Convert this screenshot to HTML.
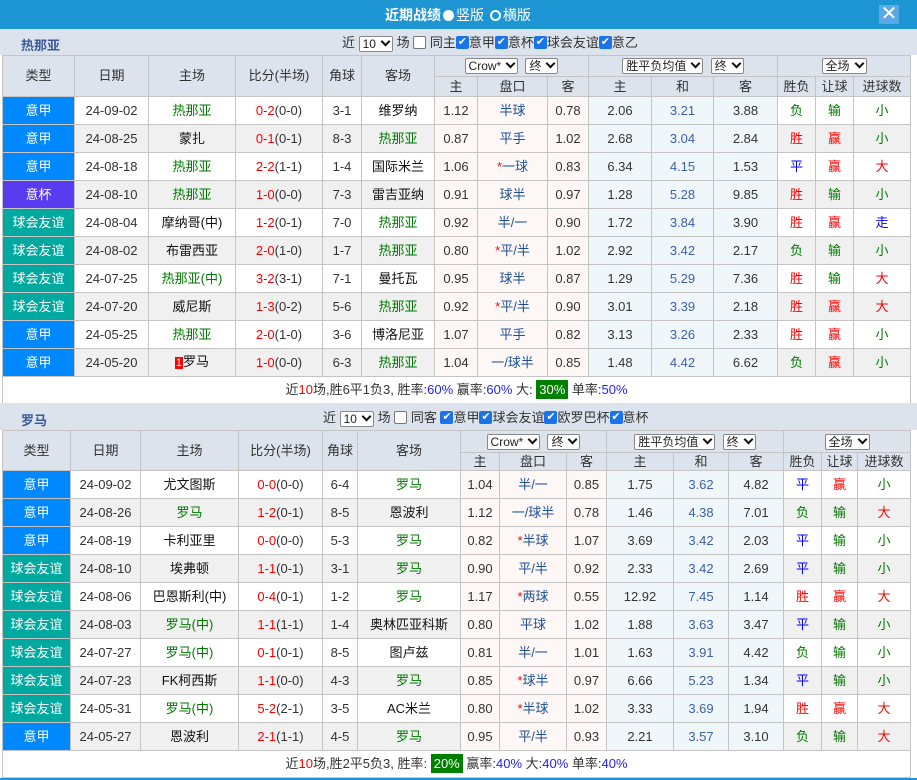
<!DOCTYPE html>
<html><head><meta charset="utf-8">
<style>
*{box-sizing:border-box;margin:0;padding:0}
body{width:917px;height:780px;background:#fff;font-family:"Liberation Sans","Noto Sans CJK SC",sans-serif;font-size:13px;color:#333;position:relative;overflow:hidden}
.title{position:absolute;left:0;top:0;width:917px;height:29px;background:#1e96d4;color:#fff}
.title .t{position:absolute;left:385px;top:5px;font-size:14px;font-weight:bold}
.rad{display:inline-block;width:11px;height:11px;border-radius:50%;vertical-align:-1px;margin:0 2px}
.close{position:absolute;left:879px;top:5px;width:20px;height:19px;background:#5aa9e6;color:#fff;font-size:20px;line-height:18px;text-align:center}
.bar{position:absolute;left:0;width:917px;background:#dce3ed}
.bar .nm{position:absolute;left:21px;font-weight:bold;color:#3a5a9a;font-size:13px}
.flt{position:absolute;white-space:nowrap;font-size:13px;color:#333;line-height:17px}
.sel{display:inline-block;border:1px solid #888;background:#fff;border-radius:2px;height:16px;line-height:14px;padding:0 3px;font-size:12px;vertical-align:middle;color:#222;white-space:nowrap}
.sel:after{content:"";display:inline-block;width:5px;height:5px;border-right:2px solid #111;border-bottom:2px solid #111;transform:rotate(45deg);margin-left:6px;vertical-align:3px}
.cb{display:inline-block;width:13px;height:13px;border-radius:2px;vertical-align:middle;text-align:center;line-height:13px;font-size:11px;position:relative;top:-1px}
.cb.on{background:#1a73e8;color:#fff}
.cb.off{background:#fff;border:1px solid #777}
table{position:absolute;left:2px;width:908px;border-collapse:collapse;table-layout:fixed}
td{border:1px solid #c4c4c4;text-align:center;white-space:nowrap;overflow:hidden;padding:0;line-height:16px}
.hd td{background:#dce3ed;color:#333}
.d td{height:28px}
.d:nth-child(even) td{background:#f0f0f0}
.d td.a{background:#fdf8f5}
.d td.e{background:#f0f7fb}
td.ty{color:#fff!important}
.yj{background:#0088ff!important}.yb{background:#5a3cf0!important}.yy{background:#00a9a0!important}
.g{color:#007a00}.r{color:#f00}.b{color:#00f}.k{color:#111}.h{color:#1e4e9a}.m{color:#3c5fa8}
.sum td{height:27px;background:#fff;font-size:13px}
.gb{background:#008000;color:#fff;padding:2px 3px}
.p{color:#22f}
.rk{background:#f00;color:#fff;font-size:11px;padding:0 1px}
</style></head><body>
<div class="title"><span class="t">近期战绩<span class="rad" style="background:#fff"></span><span style="font-weight:normal">竖版</span> <span class="rad" style="border:2px solid #fff"></span><span style="font-weight:normal">横版</span></span><div class="close">✕</div></div>

<div class="bar" style="top:29px;height:26px"><span class="nm" style="top:6px">热那亚</span>
<div class="flt" style="left:342px;top:5px">近 <span class="sel">10</span> 场 <span class="cb off"></span> 同主<span class="cb on">✔</span>意甲<span class="cb on">✔</span>意杯<span class="cb on">✔</span>球会友谊<span class="cb on">✔</span>意乙</div></div>

<table style="top:55px">
<colgroup><col width="72"><col width="74"><col width="87"><col width="87"><col width="39"><col width="73"><col width="43"><col width="70"><col width="41"><col width="63"><col width="62"><col width="64"><col width="38"><col width="38"><col width="57"></colgroup>
<tr class="hd" style="height:21px"><td rowspan="2">类型</td><td rowspan="2">日期</td><td rowspan="2">主场</td><td rowspan="2">比分(半场)</td><td rowspan="2">角球</td><td rowspan="2">客场</td><td colspan="3"><span class="sel">Crow*</span> &nbsp;<span class="sel">终</span></td><td colspan="3"><span class="sel">胜平负均值</span> &nbsp;<span class="sel">终</span></td><td colspan="3"><span class="sel">全场</span></td></tr>
<tr class="hd" style="height:20px"><td>主</td><td>盘口</td><td>客</td><td>主</td><td>和</td><td>客</td><td>胜负</td><td>让球</td><td>进球数</td></tr>
<tbody>
<tr class="d"><td class="ty yj">意甲</td><td>24-09-02</td><td class="g">热那亚</td><td><span class="r">0-2</span>(0-0)</td><td>3-1</td><td class="k">维罗纳</td><td class="a">1.12</td><td class="a h">半球</td><td class="a">0.78</td><td class="e">2.06</td><td class="e m">3.21</td><td class="e">3.88</td><td class="g">负</td><td class="g">输</td><td class="g">小</td></tr>
<tr class="d"><td class="ty yj">意甲</td><td>24-08-25</td><td class="k">蒙扎</td><td><span class="r">0-1</span>(0-1)</td><td>8-3</td><td class="g">热那亚</td><td class="a">0.87</td><td class="a h">平手</td><td class="a">1.02</td><td class="e">2.68</td><td class="e m">3.04</td><td class="e">2.84</td><td class="r">胜</td><td class="r">赢</td><td class="g">小</td></tr>
<tr class="d"><td class="ty yj">意甲</td><td>24-08-18</td><td class="g">热那亚</td><td><span class="r">2-2</span>(1-1)</td><td>1-4</td><td class="k">国际米兰</td><td class="a">1.06</td><td class="a h"><span class="r">*</span>一球</td><td class="a">0.83</td><td class="e">6.34</td><td class="e m">4.15</td><td class="e">1.53</td><td class="b">平</td><td class="r">赢</td><td class="r">大</td></tr>
<tr class="d"><td class="ty yb">意杯</td><td>24-08-10</td><td class="g">热那亚</td><td><span class="r">1-0</span>(0-0)</td><td>7-3</td><td class="k">雷吉亚纳</td><td class="a">0.91</td><td class="a h">球半</td><td class="a">0.97</td><td class="e">1.28</td><td class="e m">5.28</td><td class="e">9.85</td><td class="r">胜</td><td class="g">输</td><td class="g">小</td></tr>
<tr class="d"><td class="ty yy">球会友谊</td><td>24-08-04</td><td class="k">摩纳哥(中)</td><td><span class="r">1-2</span>(0-1)</td><td>7-0</td><td class="g">热那亚</td><td class="a">0.92</td><td class="a h">半/一</td><td class="a">0.90</td><td class="e">1.72</td><td class="e m">3.84</td><td class="e">3.90</td><td class="r">胜</td><td class="r">赢</td><td class="b">走</td></tr>
<tr class="d"><td class="ty yy">球会友谊</td><td>24-08-02</td><td class="k">布雷西亚</td><td><span class="r">2-0</span>(1-0)</td><td>1-7</td><td class="g">热那亚</td><td class="a">0.80</td><td class="a h"><span class="r">*</span>平/半</td><td class="a">1.02</td><td class="e">2.92</td><td class="e m">3.42</td><td class="e">2.17</td><td class="g">负</td><td class="g">输</td><td class="g">小</td></tr>
<tr class="d"><td class="ty yy">球会友谊</td><td>24-07-25</td><td class="g">热那亚(中)</td><td><span class="r">3-2</span>(3-1)</td><td>7-1</td><td class="k">曼托瓦</td><td class="a">0.95</td><td class="a h">球半</td><td class="a">0.87</td><td class="e">1.29</td><td class="e m">5.29</td><td class="e">7.36</td><td class="r">胜</td><td class="g">输</td><td class="r">大</td></tr>
<tr class="d"><td class="ty yy">球会友谊</td><td>24-07-20</td><td class="k">威尼斯</td><td><span class="r">1-3</span>(0-2)</td><td>5-6</td><td class="g">热那亚</td><td class="a">0.92</td><td class="a h"><span class="r">*</span>平/半</td><td class="a">0.90</td><td class="e">3.01</td><td class="e m">3.39</td><td class="e">2.18</td><td class="r">胜</td><td class="r">赢</td><td class="r">大</td></tr>
<tr class="d"><td class="ty yj">意甲</td><td>24-05-25</td><td class="g">热那亚</td><td><span class="r">2-0</span>(1-0)</td><td>3-6</td><td class="k">博洛尼亚</td><td class="a">1.07</td><td class="a h">平手</td><td class="a">0.82</td><td class="e">3.13</td><td class="e m">3.26</td><td class="e">2.33</td><td class="r">胜</td><td class="r">赢</td><td class="g">小</td></tr>
<tr class="d"><td class="ty yj">意甲</td><td>24-05-20</td><td class="k"><span class="rk">1</span>罗马</td><td><span class="r">1-0</span>(0-0)</td><td>6-3</td><td class="g">热那亚</td><td class="a">1.04</td><td class="a h">一/球半</td><td class="a">0.85</td><td class="e">1.48</td><td class="e m">4.42</td><td class="e">6.62</td><td class="g">负</td><td class="r">赢</td><td class="g">小</td></tr>
<tr class="sum"><td colspan="15">近<span class="r">10</span>场,胜6平1负3, 胜率:<span class="p">60%</span> 赢率:<span class="p">60%</span> 大: <span class="gb">30%</span> 单率:<span class="p">50%</span></td></tr>
</tbody></table>

<div class="bar" style="top:403px;height:27px"><span class="nm" style="top:7px">罗马</span>
<div class="flt" style="left:323px;top:6px">近 <span class="sel">10</span> 场 <span class="cb off"></span> 同客 <span class="cb on">✔</span>意甲<span class="cb on">✔</span>球会友谊<span class="cb on">✔</span>欧罗巴杯<span class="cb on">✔</span>意杯</div></div>

<table style="top:430px">
<colgroup><col width="68"><col width="70"><col width="98"><col width="84"><col width="35"><col width="103"><col width="39"><col width="67"><col width="40"><col width="67"><col width="55"><col width="55"><col width="38"><col width="36"><col width="53"></colgroup>
<tr class="hd" style="height:22px"><td rowspan="2">类型</td><td rowspan="2">日期</td><td rowspan="2">主场</td><td rowspan="2">比分(半场)</td><td rowspan="2">角球</td><td rowspan="2">客场</td><td colspan="3"><span class="sel">Crow*</span> &nbsp;<span class="sel">终</span></td><td colspan="3"><span class="sel">胜平负均值</span> &nbsp;<span class="sel">终</span></td><td colspan="3"><span class="sel">全场</span></td></tr>
<tr class="hd" style="height:18px"><td>主</td><td>盘口</td><td>客</td><td>主</td><td>和</td><td>客</td><td>胜负</td><td>让球</td><td>进球数</td></tr>
<tbody>
<tr class="d"><td class="ty yj">意甲</td><td>24-09-02</td><td class="k">尤文图斯</td><td><span class="r">0-0</span>(0-0)</td><td>6-4</td><td class="g">罗马</td><td class="a">1.04</td><td class="a h">半/一</td><td class="a">0.85</td><td class="e">1.75</td><td class="e m">3.62</td><td class="e">4.82</td><td class="b">平</td><td class="r">赢</td><td class="g">小</td></tr>
<tr class="d"><td class="ty yj">意甲</td><td>24-08-26</td><td class="g">罗马</td><td><span class="r">1-2</span>(0-1)</td><td>8-5</td><td class="k">恩波利</td><td class="a">1.12</td><td class="a h">一/球半</td><td class="a">0.78</td><td class="e">1.46</td><td class="e m">4.38</td><td class="e">7.01</td><td class="g">负</td><td class="g">输</td><td class="r">大</td></tr>
<tr class="d"><td class="ty yj">意甲</td><td>24-08-19</td><td class="k">卡利亚里</td><td><span class="r">0-0</span>(0-0)</td><td>5-3</td><td class="g">罗马</td><td class="a">0.82</td><td class="a h"><span class="r">*</span>半球</td><td class="a">1.07</td><td class="e">3.69</td><td class="e m">3.42</td><td class="e">2.03</td><td class="b">平</td><td class="g">输</td><td class="g">小</td></tr>
<tr class="d"><td class="ty yy">球会友谊</td><td>24-08-10</td><td class="k">埃弗顿</td><td><span class="r">1-1</span>(0-1)</td><td>3-1</td><td class="g">罗马</td><td class="a">0.90</td><td class="a h">平/半</td><td class="a">0.92</td><td class="e">2.33</td><td class="e m">3.42</td><td class="e">2.69</td><td class="b">平</td><td class="g">输</td><td class="g">小</td></tr>
<tr class="d"><td class="ty yy">球会友谊</td><td>24-08-06</td><td class="k">巴恩斯利(中)</td><td><span class="r">0-4</span>(0-1)</td><td>1-2</td><td class="g">罗马</td><td class="a">1.17</td><td class="a h"><span class="r">*</span>两球</td><td class="a">0.55</td><td class="e">12.92</td><td class="e m">7.45</td><td class="e">1.14</td><td class="r">胜</td><td class="r">赢</td><td class="r">大</td></tr>
<tr class="d"><td class="ty yy">球会友谊</td><td>24-08-03</td><td class="g">罗马(中)</td><td><span class="r">1-1</span>(1-1)</td><td>1-4</td><td class="k">奥林匹亚科斯</td><td class="a">0.80</td><td class="a h">平球</td><td class="a">1.02</td><td class="e">1.88</td><td class="e m">3.63</td><td class="e">3.47</td><td class="b">平</td><td class="g">输</td><td class="g">小</td></tr>
<tr class="d"><td class="ty yy">球会友谊</td><td>24-07-27</td><td class="g">罗马(中)</td><td><span class="r">0-1</span>(0-1)</td><td>8-5</td><td class="k">图卢兹</td><td class="a">0.81</td><td class="a h">半/一</td><td class="a">1.01</td><td class="e">1.63</td><td class="e m">3.91</td><td class="e">4.42</td><td class="g">负</td><td class="g">输</td><td class="g">小</td></tr>
<tr class="d"><td class="ty yy">球会友谊</td><td>24-07-23</td><td class="k">FK柯西斯</td><td><span class="r">1-1</span>(0-0)</td><td>4-3</td><td class="g">罗马</td><td class="a">0.85</td><td class="a h"><span class="r">*</span>球半</td><td class="a">0.97</td><td class="e">6.66</td><td class="e m">5.23</td><td class="e">1.34</td><td class="b">平</td><td class="g">输</td><td class="g">小</td></tr>
<tr class="d"><td class="ty yy">球会友谊</td><td>24-05-31</td><td class="g">罗马(中)</td><td><span class="r">5-2</span>(2-1)</td><td>3-5</td><td class="k">AC米兰</td><td class="a">0.80</td><td class="a h"><span class="r">*</span>半球</td><td class="a">1.02</td><td class="e">3.33</td><td class="e m">3.69</td><td class="e">1.94</td><td class="r">胜</td><td class="r">赢</td><td class="r">大</td></tr>
<tr class="d"><td class="ty yj">意甲</td><td>24-05-27</td><td class="k">恩波利</td><td><span class="r">2-1</span>(1-1)</td><td>4-5</td><td class="g">罗马</td><td class="a">0.95</td><td class="a h">平/半</td><td class="a">0.93</td><td class="e">2.21</td><td class="e m">3.57</td><td class="e">3.10</td><td class="g">负</td><td class="g">输</td><td class="r">大</td></tr>
<tr class="sum"><td colspan="15">近<span class="r">10</span>场,胜2平5负3, 胜率: <span class="gb">20%</span> 赢率:<span class="p">40%</span> 大:<span class="p">40%</span> 单率:<span class="p">40%</span></td></tr>
</tbody></table>
<div style="position:absolute;left:0;top:778px;width:917px;height:2px;background:#1e96d4"></div>
</body></html>
